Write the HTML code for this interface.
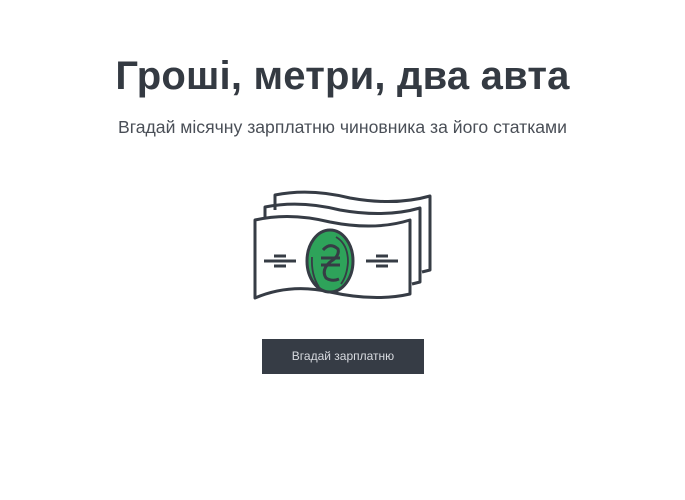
<!DOCTYPE html><html><head><meta charset="utf-8"><style>
body{margin:0;width:685px;height:500px;background:#fff;font-family:"Liberation Sans",sans-serif;position:relative;overflow:hidden}
h1{position:absolute;top:54px;left:0;width:685px;margin:0;text-align:center;font-size:40px;font-weight:bold;color:#343a42;letter-spacing:0.2px}
p{position:absolute;top:117px;left:0;width:685px;margin:0;text-align:center;font-size:17.6px;color:#4a4f57}
.btn{position:absolute;left:262px;top:339px;width:162px;height:35px;background:#363c45;color:#d8dbe0;font-size:12px;line-height:35px;text-align:center}
</style></head><body>
<h1>Гроші, метри, два авта</h1>
<p>Вгадай місячну зарплатню чиновника за його статками</p>
<svg style="position:absolute;left:0;top:0" width="685" height="500" fill="none" stroke="#363c45" stroke-width="3" stroke-linejoin="round">
<path d="M275 210 L275 195 Q310 188 350 198 Q395 206 430 196 L430 270 L422 272"/>
<path d="M265 222 L265 207 Q300 200 340 210 Q385 218 420 208 L420 282 L412 284"/>
<path d="M255 220 Q290 212 330 222 Q375 231 410 220 L410 294 Q375 302 330 292 Q290 283 255 298 Z" fill="#fff"/>
<ellipse cx="330" cy="261" rx="23" ry="31" fill="#2ea35a"/>
<path d="M336 237 Q348 244 348 262 Q347 276 341 284" stroke-width="1.8"/>
<path d="M312 257 Q311 275 319 287" stroke-width="1.8"/>
<path d="M323 250 Q330 242 338 249 Q340 256 330 262 Q321 270 326 278 Q332 282 339 279 M321 258 H340 M321 265 H340" stroke-width="3"/>
<path d="M264 261 H296 M274 256 H286 M274 266 H286 M366 261 H398 M376 256 H388 M376 266 H388" stroke-width="3"/>
</svg>
<div class="btn">Вгадай зарплатню</div>
</body></html>
